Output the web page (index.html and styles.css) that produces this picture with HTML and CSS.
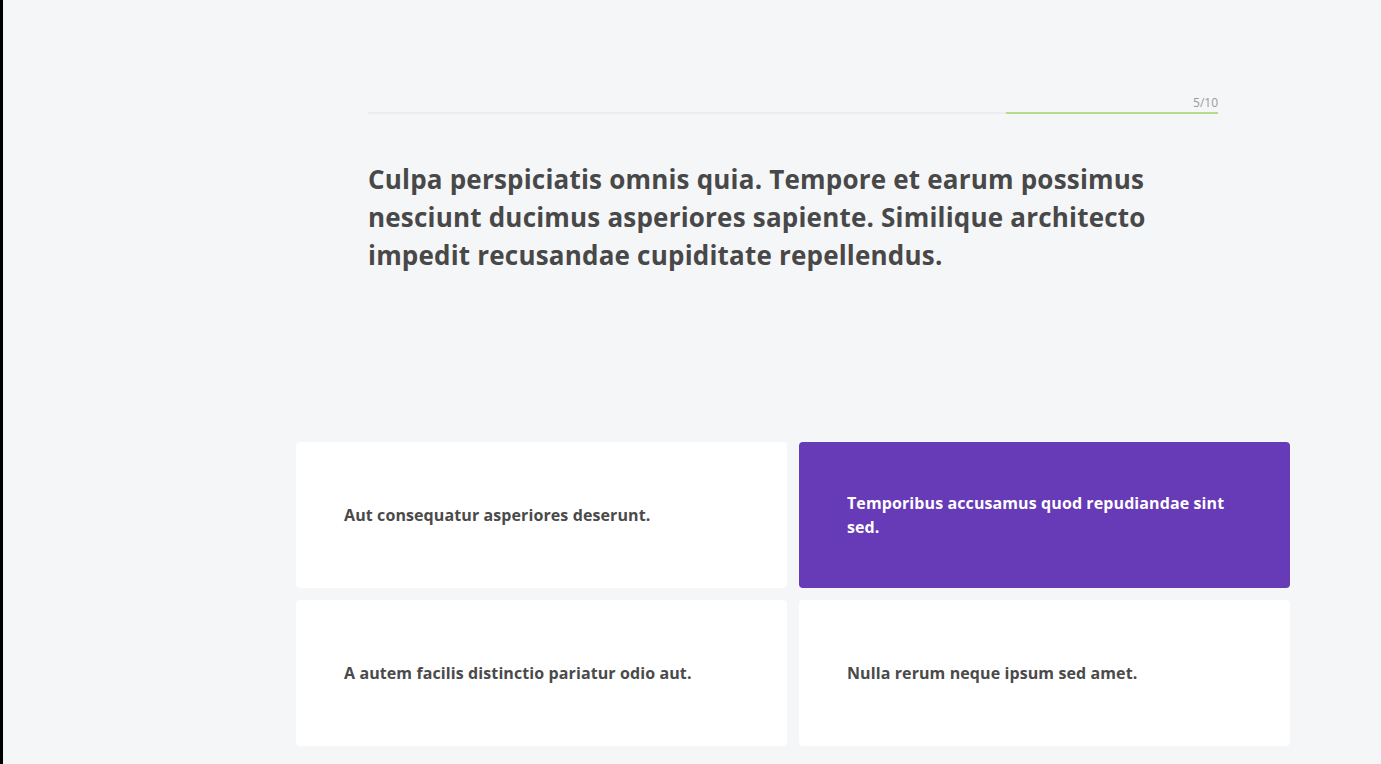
FILE: index.html
```
<html>
	<head>
		<meta charset="utf-8" />
		<title>Quiz</title>
		<link rel="stylesheet" href="styles.css">
	</head>
	<body>
		<div class="page">
			<div class="edge"></div>
			<div class="main">
				<div class="head">
					<div class="progress">
						<div class="count">5/10</div>
						<div class="track"><div class="fill"></div></div>
					</div>
					<div class="question">Culpa perspiciatis omnis quia. Tempore et earum possimus nesciunt ducimus asperiores sapiente. Similique architecto impedit recusandae cupiditate repellendus.</div>
				</div>
				<div class="answers">
					<div class="answer">Aut consequatur asperiores deserunt.</div>
					<div class="answer picked">Temporibus accusamus quod repudiandae sint sed.</div>
					<div class="answer">A autem facilis distinctio pariatur odio aut.</div>
					<div class="answer">Nulla rerum neque ipsum sed amet.</div>
				</div>
			</div>
		</div>
	</body>
</html>
```
FILE: styles.css
```
body{
	margin: 0;
	background: #f5f6f8;
	font-family: "Open Sans", "Noto Sans", sans-serif;
	color: #474747;
}
.page{
	display: flex;
	min-height: 764px;
}
.edge{
	width: 3px;
	background: #000;
}
/* area is shifted right, its centre sits at 793px */
.main{
	flex: 1;
	padding-left: 202px;
}
.head{
	width: 850px;
	margin: 0 auto;
	padding-top: 95px;
}
.progress .count{
	text-align: right;
	font-size: 12px;
	line-height: 16px;
	color: #9a9a9a;
}
.progress .track{
	height: 2px;
	background: #ebedf0;
	display: flex;
	justify-content: flex-end;
	margin-top: 1px;
}
.progress .fill{
	width: 212px;
	background: #b5dc8e;
}
.question{
	margin-top: 46px;
	font-size: 26px;
	font-weight: 700;
	line-height: 38px;
	letter-spacing: 0.2px;
	color: #484848;
	padding-right: 60px;
}
.answers{
	width: 994px;
	margin: 168px auto 0;
	display: grid;
	grid-template-columns: 1fr 1fr;
	gap: 12px;
}
.answer{
	height: 146px;
	background: #fff;
	border-radius: 4px;
	padding: 0 48px;
	display: flex;
	align-items: center;
	font-size: 16px;
	font-weight: 700;
	line-height: 24px;
	letter-spacing: 0.1px;
	color: #4a4a4a;
}
.answer.picked{
	background: #673ab7;
	color: #fff;
}
```
